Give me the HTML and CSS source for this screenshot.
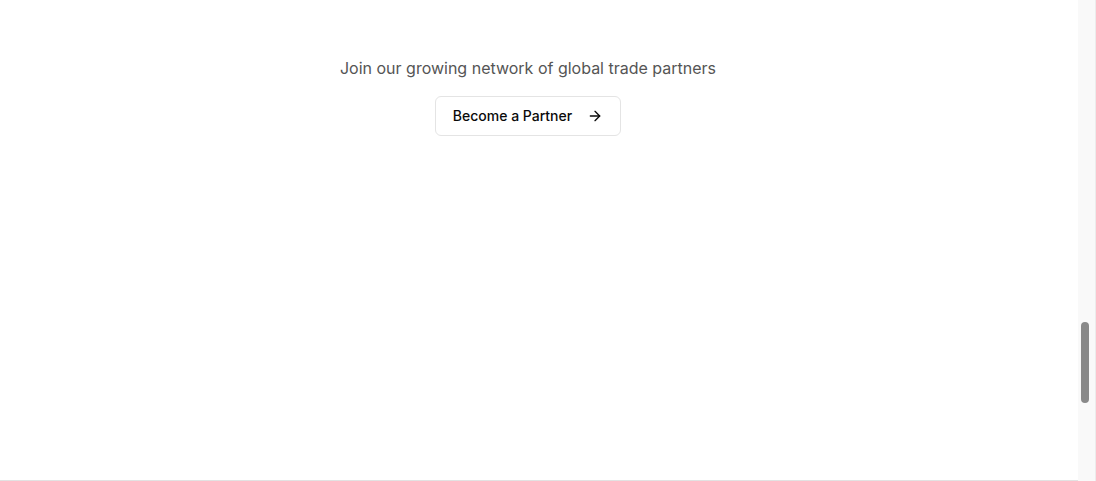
FILE: index.html
```html
<!DOCTYPE html>
<html lang="en">
<head>
<meta charset="utf-8">
<title>Become a Partner</title>
<link rel="stylesheet" href="styles.css">
</head>
<body>
<div class="page">
  <main class="main">
    <section class="cta">
      <p class="cta-text">Join our growing network of global trade partners</p>
      <button class="cta-button" type="button">
        <span>Become a Partner</span>
        <svg class="icon" width="16" height="16" viewBox="0 0 24 24" fill="none" stroke="currentColor" stroke-width="2" stroke-linecap="round" stroke-linejoin="round"><path d="M5 12h14"/><path d="m12 5 7 7-7 7"/></svg>
      </button>
    </section>
  </main>
  <div class="scrollbar"><div class="thumb"></div></div>
</div>
</body>
</html>
```
FILE: styles.css
```css
html, body {
  margin: 0;
  padding: 0;
  background: #ffffff;
  overflow: hidden;
}
.page {
  display: flex;
  width: 1096px;
  height: 481px;
  font-family: Inter, "Noto Sans", sans-serif;
}
.main {
  flex: 1;
  height: 480px;
  border-bottom: 1px solid #e2e2e2;
}
.cta {
  display: flex;
  flex-direction: column;
  align-items: center;
  padding: 56px 22px 0 0;
}
.cta-text {
  margin: 0;
  font-size: 16px;
  line-height: 24px;
  color: #555555;
}
.cta-button {
  margin-top: 16px;
  display: flex;
  align-items: center;
  gap: 15px;
  height: 40px;
  padding: 0 17px 1px 17px;
  border: 1px solid #e4e4e4;
  border-radius: 6px;
  background: #ffffff;
  font-family: inherit;
  font-size: 14px;
  font-weight: 500;
  color: #0a0a0a;
}
.icon {
  display: block;
}
.scrollbar {
  width: 18px;
  height: 481px;
  background: #f9f9f9;
  border-right: 1px solid #ececec;
  box-sizing: border-box;
  padding: 322px 0 0 3px;
}
.thumb {
  width: 8px;
  height: 81px;
  border-radius: 4px;
  background: #898989;
}
```
